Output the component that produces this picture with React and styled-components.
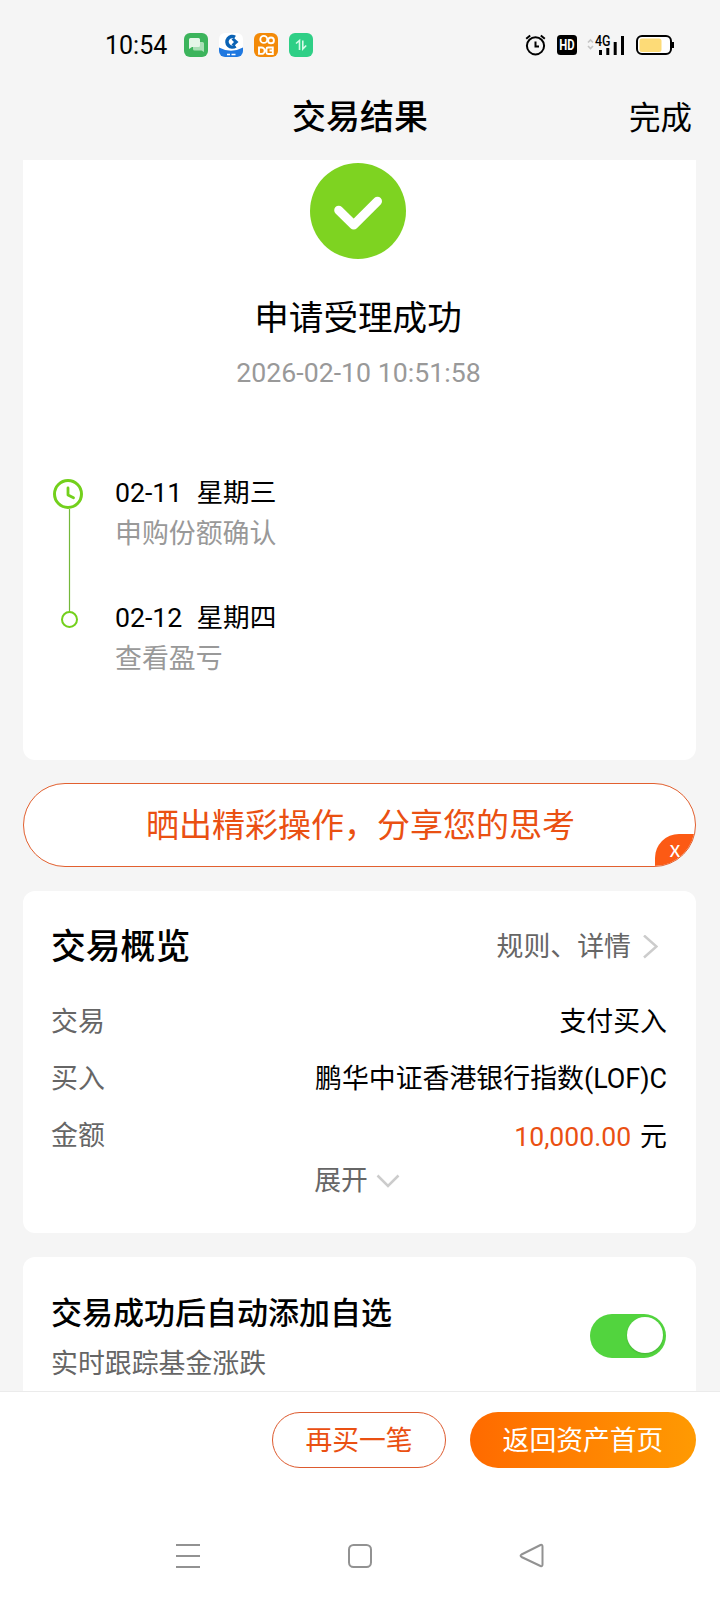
import React, { useState } from "react";
import styled, { createGlobalStyle } from "styled-components";

const GlobalStyle = createGlobalStyle`
  * {
    box-sizing: border-box;
  }

  body {
    margin: 0;
    background: #f5f5f5;
    font-family: Roboto, "Noto Sans CJK SC", sans-serif;
    color: #000;
  }

  button {
    font-family: inherit;
    padding: 0;
    cursor: pointer;
  }
`;

const Screen = styled.div`
  width: 720px;
  height: 1600px;
  display: flex;
  flex-direction: column;
  overflow: hidden;
  background: #f5f5f5;
`;

const StatusBar = styled.div`
  height: 74px;
  padding: 16px 45px 0 105px;
  display: flex;
  align-items: center;
  flex-shrink: 0;
`;

const Clock = styled.div`
  width: 79px;
  padding-top: 2px;
  font-size: 25px;
  line-height: 30px;
`;

const AppIcons = styled.div`
  display: flex;
  gap: 11px;
  flex: 1;
`;

const SystemIcons = styled.div`
  display: flex;
  align-items: center;
`;

const Header = styled.header`
  height: 86px;
  padding: 0 28px;
  display: grid;
  grid-template-columns: 1fr auto 1fr;
  align-items: center;
  flex-shrink: 0;
`;

const PageTitle = styled.h1`
  grid-column: 2;
  margin: 0;
  font-size: 34px;
  font-weight: 500;
  line-height: 40px;
`;

const DoneButton = styled.button`
  justify-self: end;
  padding-top: 3px;
  border: none;
  background: none;
  font-size: 31.5px;
  line-height: 40px;
  color: #000;
`;

const Content = styled.main`
  flex: 1;
  min-height: 0;
  overflow: hidden;
  padding: 0 24px 0 23px;
  display: flex;
  flex-direction: column;
`;

const Card = styled.section`
  flex-shrink: 0;
  background: #fff;
  border-radius: 12px;
  padding: 0 29px 0 28px;
`;

const ResultCard = styled(Card)`
  height: 600px;
  border-radius: 0 0 12px 12px;
  padding-top: 3px;
  padding-right: 31px;
  display: flex;
  flex-direction: column;
  align-items: center;
`;

const ResultTitle = styled.div`
  margin-top: 39px;
  font-size: 34.6px;
  line-height: 40px;
`;

const ResultTime = styled.div`
  margin-top: 19px;
  padding-left: 1px;
  font-size: 26.7px;
  line-height: 32px;
  color: #999;
`;

const Timeline = styled.div`
  align-self: stretch;
  margin-top: 84px;
  display: flex;
  gap: 30px;
`;

const Steps = styled.div`
  display: flex;
  flex-direction: column;
  gap: 45px;
`;

const StepDate = styled.div`
  display: flex;
  gap: 14px;
  font-size: 26.7px;
  line-height: 40px;
`;

const StepText = styled.div`
  padding-top: 1px;
  margin-bottom: -1px;
  font-size: 26.9px;
  line-height: 40px;
  color: #999;
`;

const ShareButton = styled.button`
  position: relative;
  flex-shrink: 0;
  height: 84px;
  margin: 23px 0 24px;
  padding: 2px 0 0 2px;
  border: 1px solid #e2602f;
  border-radius: 42px;
  overflow: hidden;
  background: #fff;
  color: #ea5012;
  font-size: 33px;
  line-height: 40px;
`;

const CloseBadge = styled.span`
  position: absolute;
  right: 0;
  bottom: 0;
  width: 40px;
  height: 32px;
  border-top-left-radius: 24px;
  background: #fc5a14;
  color: #fff;
  font-family: "Noto Sans CJK SC", sans-serif;
  font-size: 22px;
  line-height: 27px;
  text-align: center;
`;

const OverviewCard = styled(Card)`
  height: 342px;
  margin-bottom: 24px;
  padding-top: 36px;
`;

const CardHead = styled.div`
  display: flex;
  align-items: center;
  justify-content: space-between;
  height: 40px;
  margin-bottom: 27px;
`;

const CardTitle = styled.h2`
  margin: 0;
  font-size: ${(props) => props.$size}px;
  font-weight: 500;
  line-height: 40px;
`;

const DetailLink = styled.div`
  display: flex;
  align-items: center;
  gap: 11px;
  padding-right: 9px;
  font-size: 26.9px;
  line-height: 40px;
  color: #666;
`;

const Row = styled.div`
  display: flex;
  justify-content: space-between;
  height: 57px;
  font-size: 26.9px;
  line-height: 57px;
`;

const Label = styled.span`
  color: #666;
`;

const Amount = styled.span`
  color: #ea5012;
  margin-right: 9px;
  font-size: 26.6px;
`;

const Expand = styled.div`
  display: flex;
  align-items: center;
  justify-content: center;
  gap: 8px;
  margin-top: -4px;
  padding-right: 4px;
  font-size: 26.8px;
  line-height: 40px;
  color: #666;
`;

const WatchCard = styled(Card)`
  height: 160px;
  padding-top: 37px;
  padding-right: 30px;
  display: flex;
  justify-content: space-between;
`;

const WatchHint = styled.div`
  margin-top: 10px;
  font-size: 26.9px;
  line-height: 40px;
  color: #666;
`;

const Switch = styled.button`
  width: 76px;
  height: 44px;
  margin-top: 20px;
  padding: 0 3px 2px;
  border: none;
  border-radius: 22px;
  display: flex;
  align-items: center;
  justify-content: ${(props) => (props.$on ? "flex-end" : "flex-start")};
  background: ${(props) => (props.$on ? "#52d43e" : "#ddd")};
`;

const Knob = styled.span`
  width: 36px;
  height: 36px;
  border-radius: 50%;
  background: #fff;
  box-shadow: 0 1px 2px rgba(0, 0, 0, 0.15);
`;

const Footer = styled.footer`
  height: 209px;
  flex-shrink: 0;
  border-top: 1px solid #ebebeb;
  background: #fff;
`;

const Actions = styled.div`
  display: flex;
  justify-content: flex-end;
  gap: 24px;
  padding: 20px 24px 0 0;
`;

const ActionButton = styled.button`
  width: ${(props) => props.$width}px;
  height: 56px;
  padding-top: 2px;
  border-radius: 28px;
  border: ${(props) => (props.$primary ? "none" : "1px solid #dd5a2e")};
  background: ${(props) =>
    props.$primary ? "linear-gradient(90deg, #ff6a00, #ff9a02)" : "#fff"};
  color: ${(props) => (props.$primary ? "#fff" : "#ea5012")};
  font-size: 26.8px;
  line-height: 40px;
`;

const NavBar = styled.nav`
  display: flex;
  justify-content: space-between;
  padding: 74px 175px 0;
`;

const MessagesIcon = () => (
  <svg width="24" height="24" viewBox="0 0 24 24">
    <rect width="24" height="24" rx="6" fill="#3cb45c" />
    <path d="M9 9h9.500a1.500 1.500 0 0 1 1.500 1.500V19l-2.500-1.500H10.500A1.500 1.500 0 0 1 9 16z" fill="#a9dfb6" />
    <path d="M6.500 5h8A1.500 1.500 0 0 1 16 6.500v6a1.500 1.500 0 0 1-1.500 1.500H8l-3 2V6.500A1.500 1.500 0 0 1 6.500 5z" fill="#e4f6e8" />
  </svg>
);

const BankIcon = () => (
  <svg width="24" height="24" viewBox="0 0 24 24">
    <clipPath id="bank">
      <rect width="24" height="24" rx="6" />
    </clipPath>
    <g clipPath="url(#bank)">
      <rect width="24" height="24" fill="#fff" />
      <path d="M0 14.500Q12 21 24 14.500V24H0z" fill="#1f78e0" />
      <path d="M16 4.200A5.300 5.300 0 1 0 16.500 13" fill="none" stroke="#0a62b4" strokeWidth="3.600" />
      <path d="M12.500 6.500L15 5L19.500 9L15 13L12.500 11.500L15 9z" fill="#0a62b4" />
      <path d="M8 21.500h3M12.500 21.500h4" stroke="#fff" strokeWidth="1.600" />
    </g>
  </svg>
);

const VideoIcon = () => (
  <svg width="24" height="24" viewBox="0 0 24 24" fill="none" stroke="#fff" strokeWidth="1.900">
    <rect width="24" height="24" rx="6" fill="#f38a08" stroke="none" />
    <circle cx="9.800" cy="6.400" r="3.500" />
    <circle cx="17" cy="7.400" r="2.900" />
    <path d="M5 14.500h2.500a3.200 3.200 0 0 1 0 6.400H5zM18.800 14.500H14a1.500 1.500 0 0 0-1.500 1.500v3.500A1.500 1.500 0 0 0 14 21h4.800zM15.500 17.500h3.500" />
  </svg>
);

const TradeIcon = () => (
  <svg width="24" height="24" viewBox="0 0 24 24" fill="none" stroke="#d8fbe8" strokeWidth="1.600">
    <rect width="24" height="24" rx="6" fill="#2fcf86" stroke="none" />
    <path d="M7 10.500l3.500-3V17M13.800 7.500V16l3.400-3.500" />
  </svg>
);

const AlarmIcon = () => (
  <svg width="22" height="24" viewBox="0 0 22 24" fill="none" stroke="#000" strokeWidth="2">
    <circle cx="10.500" cy="12.800" r="8.600" />
    <path d="M10.500 8.500v5h3.500M1.200 5.800L5.200 2.500M15.800 2.500l4 3.300" />
  </svg>
);

const HdIcon = () => (
  <svg width="40" height="24" viewBox="-10 -2 40 24">
    <rect width="20" height="20" rx="3.500" />
    <text transform="translate(10 15) scale(.78 1)" textAnchor="middle" fontSize="14.500" fontWeight="700" fill="#fff">HD</text>
  </svg>
);

const SignalIcon = () => (
  <svg width="48" height="24" viewBox="0 0 48 24">
    <path d="M1 9.500L3.500 7L6 9.500M1 13l2.500 2.500L6 13" fill="none" stroke="#c4c4c4" strokeWidth="1.600" />
    <text x="8" y="12.800" fontSize="14" fontWeight="500" textLength="15.500" lengthAdjust="spacingAndGlyphs">4G</text>
    <path d="M13.500 17v5M20.800 15v7M28.200 9v13M35.500 3v19" stroke="#000" strokeWidth="3" />
  </svg>
);

const BatteryIcon = () => (
  <svg width="40" height="24" viewBox="0 0 40 24">
    <rect x="2" y="3" width="34" height="18" rx="5" fill="#fff" stroke="#000" strokeWidth="2" />
    <rect x="4.500" y="5.500" width="22" height="13.500" rx="2.500" fill="#fddb77" />
    <path d="M38 9v6" stroke="#000" strokeWidth="2" />
  </svg>
);

const SuccessIcon = () => (
  <svg width="96" height="96" viewBox="0 0 96 96">
    <circle cx="48" cy="48" r="48" fill="#7ed321" />
    <path d="M28.700 47.200L43.700 62L67.500 38.200" fill="none" stroke="#fff" strokeWidth="9" strokeLinecap="round" strokeLinejoin="round" />
  </svg>
);

const TimelineRail = () => (
  <svg width="34" height="160" viewBox="0 0 34 160" fill="none" stroke="#73d01c">
    <path d="M18.500 36v103" stroke="#74b83a" strokeWidth="1.200" />
    <circle cx="17" cy="21" r="13.500" strokeWidth="3" />
    <path d="M17 15v7l5.500 2.800" strokeWidth="2.800" strokeLinecap="round" strokeLinejoin="round" />
    <circle cx="18.500" cy="146.500" r="7.500" strokeWidth="2" />
  </svg>
);

const Chevron = ({ down }) =>
  down ? (
    <svg width="24" height="14" viewBox="0 0 24 14" fill="none" stroke="#ccc" strokeWidth="2.500">
      <path d="M1.500 1.500L12 12L22.500 1.500" />
    </svg>
  ) : (
    <svg width="16" height="24" viewBox="0 0 16 24" fill="none" stroke="#ccc" strokeWidth="2.500">
      <path d="M2 .5L14.500 11.500L2 22.500" />
    </svg>
  );

const steps = [
  { date: "02-11", day: "星期三", text: "申购份额确认" },
  { date: "02-12", day: "星期四", text: "查看盈亏" },
];

const App = () => {
  const [autoAdd, setAutoAdd] = useState(true);
  const [showShare, setShowShare] = useState(true);

  return (
    <Screen>
      <GlobalStyle />
      <StatusBar>
        <Clock>10:54</Clock>
        <AppIcons>
          <MessagesIcon />
          <BankIcon />
          <VideoIcon />
          <TradeIcon />
        </AppIcons>
        <SystemIcons>
          <AlarmIcon />
          <HdIcon />
          <SignalIcon />
          <BatteryIcon />
        </SystemIcons>
      </StatusBar>

      <Header>
        <PageTitle>交易结果</PageTitle>
        <DoneButton>完成</DoneButton>
      </Header>

      <Content>
        <ResultCard>
          <SuccessIcon />
          <ResultTitle>申请受理成功</ResultTitle>
          <ResultTime>2026-02-10 10:51:58</ResultTime>
          <Timeline>
            <TimelineRail />
            <Steps>
              {steps.map((step) => (
                <div key={step.date}>
                  <StepDate>
                    <span>{step.date}</span>
                    <span>{step.day}</span>
                  </StepDate>
                  <StepText>{step.text}</StepText>
                </div>
              ))}
            </Steps>
          </Timeline>
        </ResultCard>

        {showShare && (
          <ShareButton>
            晒出精彩操作，分享您的思考
            <CloseBadge onClick={() => setShowShare(false)}>x</CloseBadge>
          </ShareButton>
        )}

        <OverviewCard>
          <CardHead>
            <CardTitle $size={34.8}>交易概览</CardTitle>
            <DetailLink>
              规则、详情
              <Chevron />
            </DetailLink>
          </CardHead>
          <Row>
            <Label>交易</Label>
            <span>支付买入</span>
          </Row>
          <Row>
            <Label>买入</Label>
            <span>鹏华中证香港银行指数(LOF)C</span>
          </Row>
          <Row>
            <Label>金额</Label>
            <span>
              <Amount>10,000.00</Amount>元
            </span>
          </Row>
          <Expand>
            展开
            <Chevron down />
          </Expand>
        </OverviewCard>

        <WatchCard>
          <div>
            <CardTitle $size={31}>交易成功后自动添加自选</CardTitle>
            <WatchHint>实时跟踪基金涨跌</WatchHint>
          </div>
          <Switch $on={autoAdd} onClick={() => setAutoAdd(!autoAdd)}>
            <Knob />
          </Switch>
        </WatchCard>
      </Content>

      <Footer>
        <Actions>
          <ActionButton $width={174}>再买一笔</ActionButton>
          <ActionButton $width={226} $primary>返回资产首页</ActionButton>
        </Actions>
        <NavBar>
          <svg width="26" height="26" viewBox="0 0 26 26" stroke="#929292" strokeWidth="2">
            <path d="M1 3h24M1 14h24M1 25h24" />
          </svg>
          <svg width="26" height="26" viewBox="0 0 26 26" fill="none" stroke="#929292" strokeWidth="2">
            <rect x="2" y="3" width="22" height="22" rx="4.500" />
          </svg>
          <svg width="26" height="26" viewBox="0 0 26 26" fill="none" stroke="#929292" strokeWidth="2" strokeLinejoin="round">
            <path d="M2.500 12.500L21.500 3q2-.8 2 1.500v18q0 2.200-2 1.500L2.500 15q-1.800-1.200 0-2.500z" />
          </svg>
        </NavBar>
      </Footer>
    </Screen>
  );
};

export default App;
